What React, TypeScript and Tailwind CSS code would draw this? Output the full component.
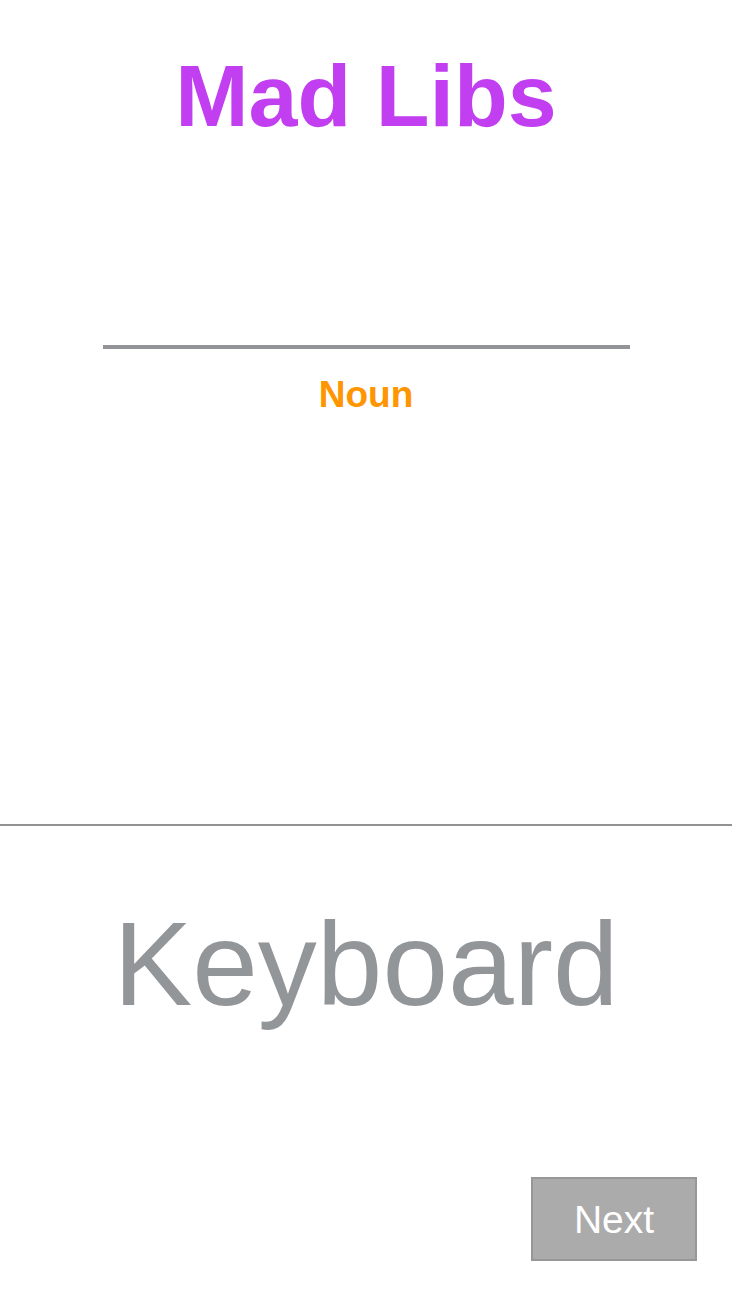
import React from 'react';

export default function App() {
  return (
    <div className="w-[732px] h-[1302px] bg-white flex flex-col items-center overflow-hidden" style={{ fontFamily: '"Liberation Sans", Arial, sans-serif' }}>
      {/* Title */}
      <h1 className="mt-[52px] text-[88px] leading-[88px] font-bold text-[#c13ff0]">Mad Libs</h1>

      {/* Answer blank */}
      <div className="mt-[205px] w-[527px] h-[4px] bg-[#929497]" />
      <p className="mt-[27px] text-[37px] leading-[37px] font-bold text-[#ff9500]">Noun</p>

      {/* Divider */}
      <div className="mt-[411px] w-full h-[2px] bg-[#929292]" />

      {/* Keyboard area */}
      <p className="mt-[79px] text-[118px] leading-[118px] text-[#939699]">Keyboard</p>

      <div className="w-full flex justify-end pr-[35px] mt-[154px]">
        <button className="w-[166px] h-[84px] bg-[#ababab] border-2 border-[#979797] text-white text-[39px] leading-none flex items-center justify-center">
          Next
        </button>
      </div>
    </div>
  );
}
